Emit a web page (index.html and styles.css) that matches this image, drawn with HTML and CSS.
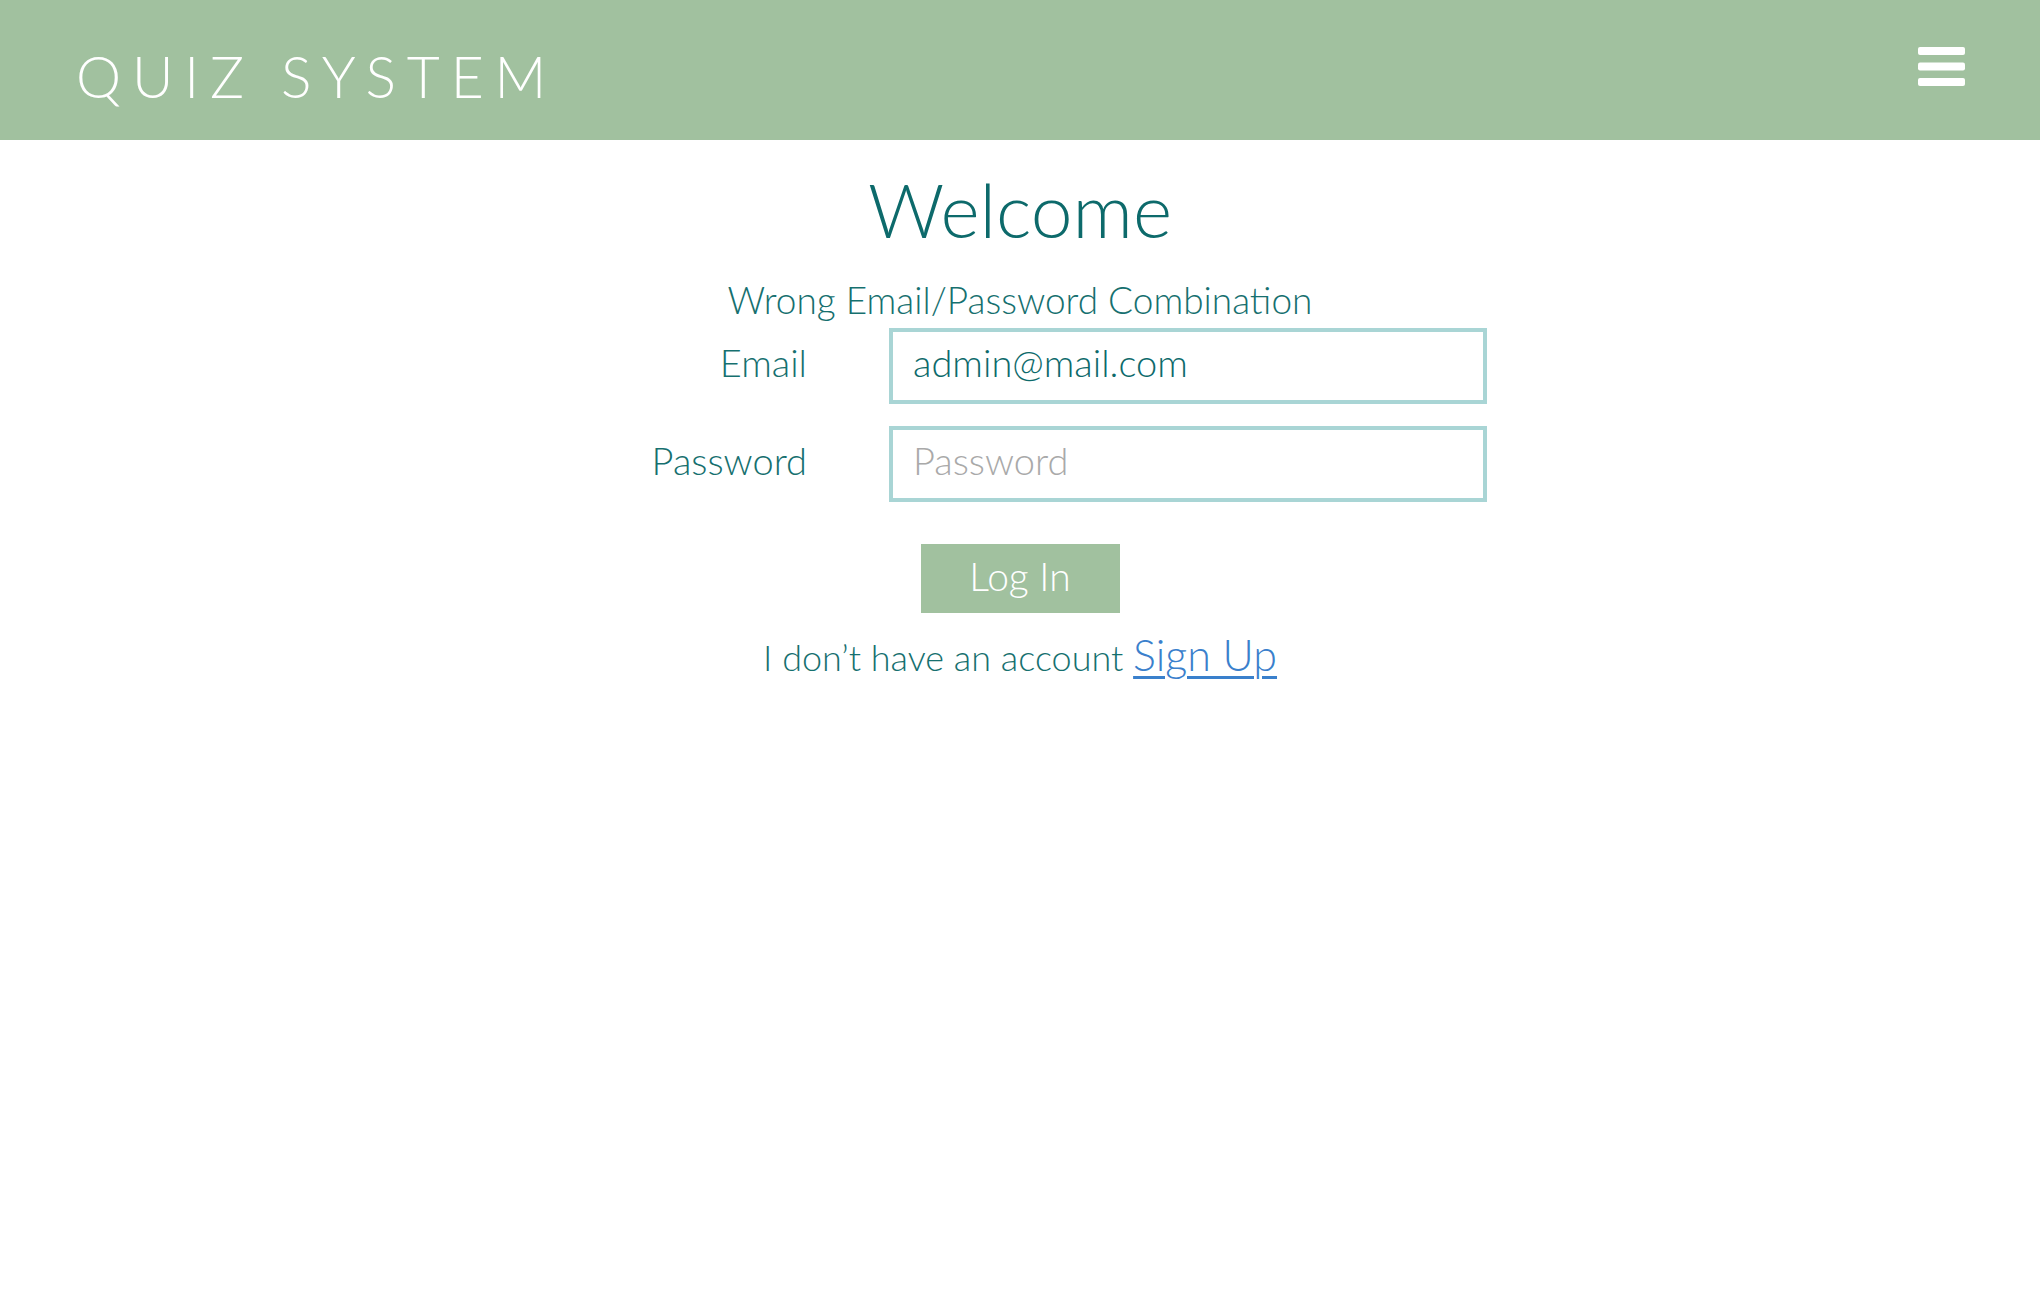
FILE: index.html
```html
<!DOCTYPE html>
<html>
<head>
<meta charset="utf-8">
<title>Quiz System</title>
<link rel="stylesheet" href="styles.css">
</head>
<body>
<header class="topbar">
  <div class="brand">QUIZ SYSTEM</div>
  <button class="menu" aria-label="Menu">
    <svg width="47" height="39" viewBox="0 0 47 39"><rect x="0" y="0" width="47" height="8" rx="2" fill="#fff"/><rect x="0" y="15.5" width="47" height="8" rx="2" fill="#fff"/><rect x="0" y="31" width="47" height="8" rx="2" fill="#fff"/></svg>
  </button>
</header>
<main class="content">
  <h1 class="title">Welcome</h1>
  <p class="error">Wrong Email/Password Combination</p>
  <form class="form">
    <label class="label" for="email">Email</label>
    <input class="field" id="email" type="text" value="admin@mail.com">
    <label class="label" for="pw">Password</label>
    <input class="field" id="pw" type="password" placeholder="Password">
  </form>
  <button class="login">Log In</button>
  <p class="signup">I don’t have an account <a href="#">Sign Up</a></p>
</main>
</body>
</html>
```
FILE: styles.css
```css
html, body {
  margin: 0;
  padding: 0;
  background: #fff;
  font-family: Lato, "Open Sans", sans-serif;
  font-weight: 300;
}
.topbar {
  height: 140px;
  background: #a1c19f;
  display: flex;
  align-items: center;
  justify-content: space-between;
  padding: 0 75px 0 76px;
  box-sizing: border-box;
}
.brand {
  color: #fff;
  font-size: 57px;
  font-weight: 300;
  letter-spacing: 0.19em;
  margin-top: 12px;
}
.menu {
  background: none;
  border: 0;
  padding: 0;
  margin-top: -8px;
  display: block;
}
.menu svg { display: block; }
.content {
  display: flex;
  flex-direction: column;
  align-items: center;
  color: #16706f;
}
.title {
  margin: 24px 0 0;
  font-size: 75px;
  font-weight: 300;
  line-height: 90px;
  color: #0d6a6b;
}
.error {
  margin: 24px 0 0;
  font-size: 37px;
  line-height: 44px;
}
.form {
  display: grid;
  grid-template-columns: 254px 598px;
  column-gap: 82px;
  row-gap: 22px;
  align-items: center;
  margin-top: 6px;
}
.label {
  text-align: right;
  font-size: 38px;
  color: #16706f;
  padding-bottom: 8px;
}
.field {
  box-sizing: border-box;
  width: 598px;
  height: 76px;
  border: 4px solid #a9d5d5;
  padding: 0 20px 8px;
  font-family: Lato, sans-serif;
  font-weight: 300;
  font-size: 38px;
  color: #0d6a6b;
  outline: none;
}
.field::placeholder { color: #a9a9a9; }
.login {
  margin-top: 42px;
  width: 199px;
  height: 69px;
  background: #a1c19f;
  color: #fff;
  border: 0;
  padding-bottom: 6px;
  font-family: Lato, sans-serif;
  font-weight: 300;
  font-size: 39px;
}
.signup {
  margin: 17px 0 0;
  font-size: 36px;
  line-height: 50px;
}
.signup a {
  color: #3a80cc;
  font-size: 43px;
  font-weight: 300;
  text-decoration: underline;
  text-decoration-thickness: 3px;
  text-underline-offset: 5px;
}
```
